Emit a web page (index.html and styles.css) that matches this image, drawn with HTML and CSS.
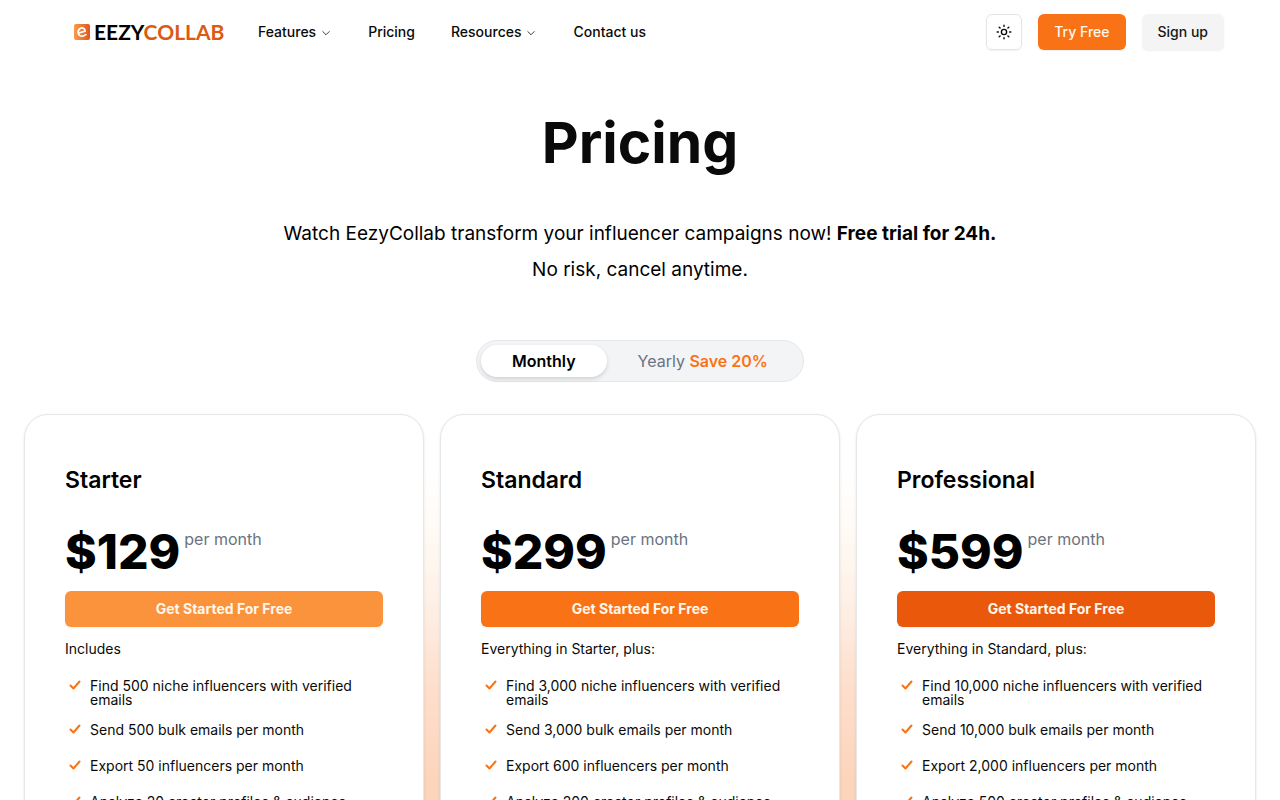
FILE: index.html
```html
<!DOCTYPE html>
<html lang="en">
<head>
    <meta charset="UTF-8">
    <meta name="viewport" content="width=device-width, initial-scale=1.0">
    <title>Pricing</title>
    <link rel="stylesheet" href="styles.css">
</head>
<body>
    <header class="header">
        <a href="#" class="logo">
            <svg class="logo-mark" viewBox="0 0 16 16" aria-hidden="true">
                <defs>
                    <linearGradient id="logo-fill" x1="0" y1="0" x2="1" y2="0">
                        <stop offset="0" stop-color="#fb9a4b"/>
                        <stop offset="1" stop-color="#e2571a"/>
                    </linearGradient>
                </defs>
                <rect width="16" height="16" rx="2" fill="url(#logo-fill)"/>
                <path d="M4.6 9 L11.2 7.2 C11 4.6 9 3.4 7 4.1 C4.6 4.9 3.6 7.4 4.4 9.7 C5.3 12.4 8.6 13.2 11.8 10.6" fill="none" stroke="#fff" stroke-width="1.8"/>
            </svg>
            <span class="logo-text">EEZY<span class="logo-accent">COLLAB</span></span>
        </a>
        <nav class="nav">
            <button type="button" class="nav-link">Features
                <svg class="chevron" viewBox="0 0 15 15" aria-hidden="true"><path d="M3.5 5.7l4 4 4-4"/></svg>
            </button>
            <a href="#" class="nav-link">Pricing</a>
            <button type="button" class="nav-link">Resources
                <svg class="chevron" viewBox="0 0 15 15" aria-hidden="true"><path d="M3.5 5.7l4 4 4-4"/></svg>
            </button>
            <a href="#" class="nav-link">Contact us</a>
        </nav>
        <div class="actions">
            <button type="button" class="btn btn-icon" aria-label="Toggle theme">
                <svg class="sun" viewBox="0 0 16 16" aria-hidden="true">
                    <circle cx="8" cy="8" r="2.6"/>
                    <path d="M8 1.2v1.2M8 13.6v1.2M1.2 8h1.2M13.6 8h1.2M3.2 3.2l.9.9M11.9 11.9l.9.9M3.2 12.8l.9-.9M11.9 4.1l.9-.9"/>
                </svg>
            </button>
            <a href="#" class="btn btn-primary">Try Free</a>
            <a href="#" class="btn btn-secondary">Sign up</a>
        </div>
    </header>

    <main class="pricing">
        <h1>Pricing</h1>
        <p class="intro">Watch EezyCollab transform your influencer campaigns now! <strong>Free trial for 24h.</strong><br>No risk, cancel anytime.</p>

        <div class="toggle">
            <button type="button" class="toggle-option active" aria-pressed="true">Monthly</button>
            <button type="button" class="toggle-option" aria-pressed="false">Yearly <span class="save">Save 20%</span></button>
        </div>

        <div class="plans">
            <section class="card">
                <h2>Starter</h2>
                <p class="price">$129<span class="period">per month</span></p>
                <button type="button" class="btn plan-btn starter">Get Started For Free</button>
                <p class="includes">Includes</p>
                <ul class="features">
                    <li><svg class="check" viewBox="0 0 12 12" aria-hidden="true"><path d="M1.5 6.5L4.5 9.5 10.5 2.5"/></svg>Find 500 niche influencers with verified emails</li>
                    <li><svg class="check" viewBox="0 0 12 12" aria-hidden="true"><path d="M1.5 6.5L4.5 9.5 10.5 2.5"/></svg>Send 500 bulk emails per month</li>
                    <li><svg class="check" viewBox="0 0 12 12" aria-hidden="true"><path d="M1.5 6.5L4.5 9.5 10.5 2.5"/></svg>Export 50 influencers per month</li>
                    <li><svg class="check" viewBox="0 0 12 12" aria-hidden="true"><path d="M1.5 6.5L4.5 9.5 10.5 2.5"/></svg>Analyze 20 creator profiles &amp; audience</li>
                </ul>
            </section>

            <section class="card">
                <h2>Standard</h2>
                <p class="price">$299<span class="period">per month</span></p>
                <button type="button" class="btn plan-btn standard">Get Started For Free</button>
                <p class="includes">Everything in Starter, plus:</p>
                <ul class="features">
                    <li><svg class="check" viewBox="0 0 12 12" aria-hidden="true"><path d="M1.5 6.5L4.5 9.5 10.5 2.5"/></svg>Find 3,000 niche influencers with verified emails</li>
                    <li><svg class="check" viewBox="0 0 12 12" aria-hidden="true"><path d="M1.5 6.5L4.5 9.5 10.5 2.5"/></svg>Send 3,000 bulk emails per month</li>
                    <li><svg class="check" viewBox="0 0 12 12" aria-hidden="true"><path d="M1.5 6.5L4.5 9.5 10.5 2.5"/></svg>Export 600 influencers per month</li>
                    <li><svg class="check" viewBox="0 0 12 12" aria-hidden="true"><path d="M1.5 6.5L4.5 9.5 10.5 2.5"/></svg>Analyze 200 creator profiles &amp; audience</li>
                </ul>
            </section>

            <section class="card">
                <h2>Professional</h2>
                <p class="price">$599<span class="period">per month</span></p>
                <button type="button" class="btn plan-btn professional">Get Started For Free</button>
                <p class="includes">Everything in Standard, plus:</p>
                <ul class="features">
                    <li><svg class="check" viewBox="0 0 12 12" aria-hidden="true"><path d="M1.5 6.5L4.5 9.5 10.5 2.5"/></svg>Find 10,000 niche influencers with verified emails</li>
                    <li><svg class="check" viewBox="0 0 12 12" aria-hidden="true"><path d="M1.5 6.5L4.5 9.5 10.5 2.5"/></svg>Send 10,000 bulk emails per month</li>
                    <li><svg class="check" viewBox="0 0 12 12" aria-hidden="true"><path d="M1.5 6.5L4.5 9.5 10.5 2.5"/></svg>Export 2,000 influencers per month</li>
                    <li><svg class="check" viewBox="0 0 12 12" aria-hidden="true"><path d="M1.5 6.5L4.5 9.5 10.5 2.5"/></svg>Analyze 500 creator profiles &amp; audience</li>
                </ul>
            </section>
        </div>
    </main>
</body>
</html>
```
FILE: styles.css
```css
* {
    box-sizing: border-box;
}
body {
    margin: 0;
    font-family: Inter, sans-serif;
    font-size: 14px;
    line-height: 20px;
    color: #0a0a0a;
    background-color: #fff;
}
h1, h2, p, ul {
    margin: 0;
    padding: 0;
}
a {
    color: inherit;
    text-decoration: none;
}
button {
    font: inherit;
    color: inherit;
    border: none;
    background: none;
    cursor: pointer;
}
svg {
    flex-shrink: 0;
    fill: none;
    stroke-linecap: round;
    stroke-linejoin: round;
}

/* header */
.header {
    display: flex;
    align-items: center;
    height: 64px;
    padding: 0 56px 0 74px;
}
.logo {
    display: flex;
    align-items: center;
    gap: 4px;
    width: 168px;
}
.logo-mark {
    width: 16px;
    height: 16px;
}
.logo-text {
    font-family: Lato, sans-serif;
    font-size: 21px;
    font-weight: 700;
    color: #000;
}
.logo-accent {
    color: #dc5a14;
}
.nav {
    display: flex;
    gap: 4px;
}
.nav-link {
    display: flex;
    align-items: center;
    gap: 4px;
    padding: 8px 16px;
    font-weight: 500;
}
.chevron {
    width: 12px;
    height: 12px;
    margin-top: 2px;
    stroke: #0a0a0a;
}
.actions {
    display: flex;
    gap: 16px;
    margin-left: auto;
}
.btn {
    display: flex;
    align-items: center;
    justify-content: center;
    height: 36px;
    padding: 0 16px;
    border-radius: 6px;
    font-weight: 500;
    box-shadow: 0 1px 2px rgba(0, 0, 0, 0.06);
}
.btn-icon {
    width: 36px;
    padding: 0;
    border: 1px solid #e5e5e5;
}
.sun {
    width: 16px;
    height: 16px;
    stroke: #0a0a0a;
    stroke-width: 1.4;
}
.btn-primary {
    background-color: #f97316;
    color: #fff7ed;
}
.btn-secondary {
    background-color: #f4f4f4;
    color: #171717;
}

/* pricing */
.pricing {
    padding: 49px 24px 40px;
}
h1 {
    font-size: 57px;
    font-weight: 700;
    line-height: 60px;
    text-align: center;
}
.intro {
    margin-top: 43px;
    font-size: 19px;
    line-height: 36px;
    text-align: center;
    color: #000;
}
.toggle {
    display: flex;
    width: fit-content;
    margin: 52px auto 32px;
    padding: 4px;
    border: 1px solid #e5e7eb;
    border-radius: 21px;
    background-color: #f3f4f6;
}
.toggle-option {
    padding: 4px 31px;
    border-radius: 16px;
    font-size: 16px;
    line-height: 24px;
    color: #6b7280;
}
.toggle-option.active {
    background-color: #fff;
    color: #000;
    font-weight: 600;
    box-shadow: 0 2px 4px rgba(0, 0, 0, 0.15);
}
.save {
    color: #f97316;
    font-weight: 600;
}
.plans {
    display: grid;
    grid-template-columns: repeat(3, 1fr);
    gap: 16px;
    /* warm glow that shows between the cards */
    background: linear-gradient(#fff 60px, #fffaf4 120px, #fef0e6 190px, #fddfcd 270px, #fcd4bb 370px) center / 60% 100% no-repeat;
}
.card {
    padding: 49px 40px 40px;
    border: 1px solid #e5e7eb;
    border-radius: 24px;
    background-color: #fff;
    box-shadow: 0 1px 3px rgba(0, 0, 0, 0.1);
}
h2 {
    font-size: 23px;
    font-weight: 600;
    line-height: 32px;
    color: #000;
}
.price {
    display: flex;
    gap: 4px;
    margin-top: 32px;
    font-size: 48px;
    font-weight: 800;
    line-height: 48px;
    color: #000;
}
.period {
    font-size: 16px;
    font-weight: 400;
    line-height: 22px;
    color: #6b7280;
}
.plan-btn {
    width: 100%;
    margin-top: 15px;
    font-weight: 700;
    color: #fff7ed;
}
.starter {
    background-color: #fb923c;
}
.standard {
    background-color: #f97316;
}
.professional {
    background-color: #ea580c;
}
.includes {
    margin: 12px 0 20px;
}
.features {
    display: flex;
    flex-direction: column;
    gap: 16px;
    list-style: none;
    line-height: 14px;
}
.features li {
    display: flex;
    gap: 9px;
    min-height: 20px;
    padding-left: 4px;
}
.check {
    width: 12px;
    height: 12px;
    stroke: #f97316;
    stroke-width: 2;
}
```
